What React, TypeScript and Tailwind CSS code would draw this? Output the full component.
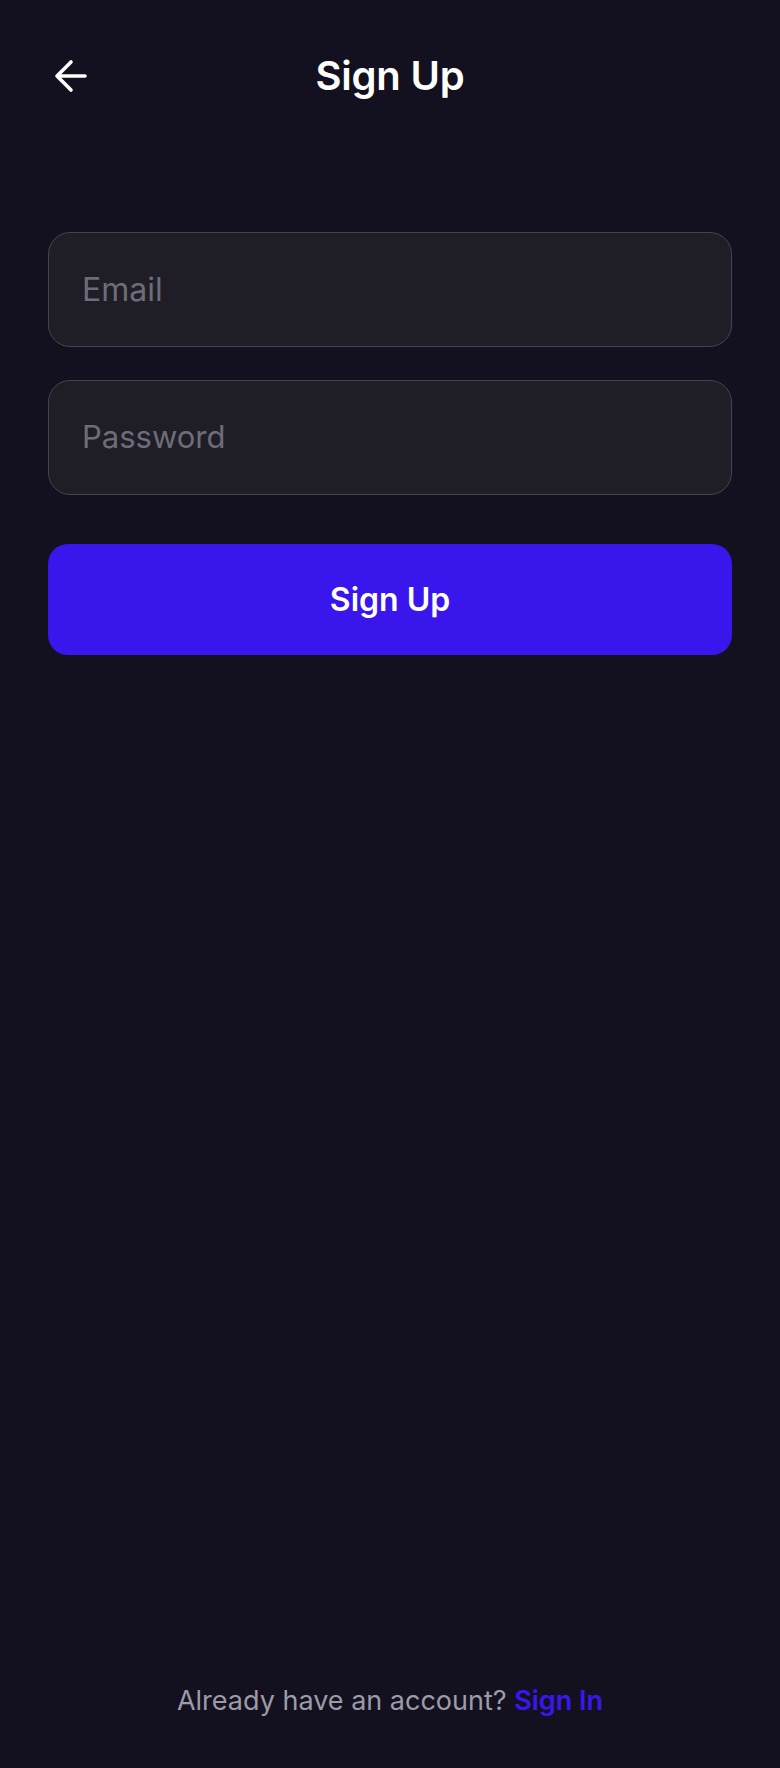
import React from "react";

export default function App() {
  return (
    <div
      className="min-h-[1768px] w-full bg-[#13111F] flex flex-col"
      style={{ fontFamily: "Inter, 'Noto Sans', sans-serif" }}
    >
      <header className="h-[152px] grid grid-cols-[1fr_auto_1fr] items-center px-[48px]">
        <button className="justify-self-start w-[44px] h-[44px] flex items-center justify-start pl-[6px]" aria-label="Back">
          <svg width="34" height="34" viewBox="0 0 34 34" fill="none">
            <path
              d="M17 3 L3 17 L17 31 M3 17 L31 17"
              stroke="#FFFFFF"
              strokeWidth="3.6"
              strokeLinecap="round"
              strokeLinejoin="round"
            />
          </svg>
        </button>
        <h1 className="text-[40px] font-semibold text-white leading-none tracking-[-0.2px]">Sign Up</h1>
        <div />
      </header>

      <main className="px-[48px] mt-[80px] flex flex-col">
        <div className="h-[115px] rounded-[22px] border-[1.5px] border-[#45444C] bg-[#1F1E27] flex items-center px-[33px]">
          <input
            placeholder="Email"
            className="w-full bg-transparent outline-none text-[32px] text-white placeholder:text-[#6E6D77]"
          />
        </div>
        <div className="mt-[33px] h-[115px] rounded-[22px] border-[1.5px] border-[#45444C] bg-[#1F1E27] flex items-center px-[33px]">
          <input
            type="password"
            placeholder="Password"
            className="w-full bg-transparent outline-none text-[31px] text-white placeholder:text-[#6E6D77]"
          />
        </div>
        <button className="mt-[49px] h-[111px] rounded-[20px] bg-[#3916EC] text-white text-[32px] font-semibold">
          Sign Up
        </button>
      </main>

      <footer className="mt-auto pb-[47px] flex justify-center">
        <p className="text-[27px] leading-[40px] text-[#9D9BA6]">
          Already have an account?{" "}
          <span className="text-[#3A17EE] font-semibold">Sign In</span>
        </p>
      </footer>
    </div>
  );
}
